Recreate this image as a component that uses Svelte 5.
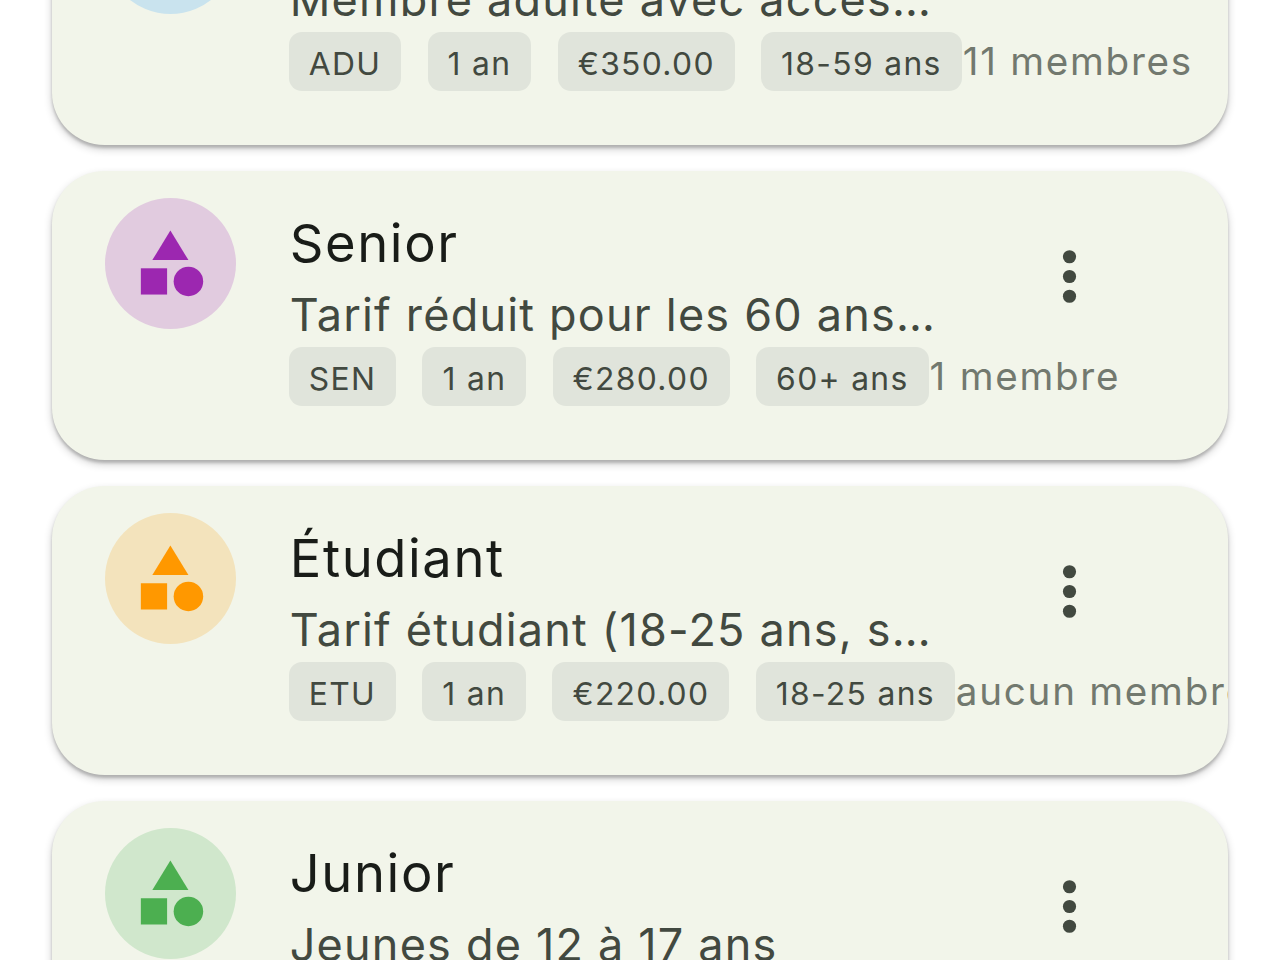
<script>
  const categories = [
    {
      name: "Adulte",
      description: "Membre adulte avec accès…",
      color: "#2196f3",
      tint: "#c9e3ee",
      tags: ["ADU", "1 an", "€350.00", "18-59 ans"],
      members: "11 membres",
    },
    {
      name: "Senior",
      description: "Tarif réduit pour les 60 ans…",
      color: "#9c27b0",
      tint: "#e1cbdf",
      tags: ["SEN", "1 an", "€280.00", "60+ ans"],
      members: "1 membre",
    },
    {
      name: "Étudiant",
      description: "Tarif étudiant (18-25 ans, s…",
      color: "#ff9800",
      tint: "#f3e3bc",
      tags: ["ETU", "1 an", "€220.00", "18-25 ans"],
      members: "aucun membre",
    },
    {
      name: "Junior",
      description: "Jeunes de 12 à 17 ans",
      color: "#4caf50",
      tint: "#d0e7cc",
      tags: ["JUN", "1 an", "€150.00", "12-17 ans"],
      members: "4 membres",
    },
  ];
</script>

<main>
  <div class="list">
    {#each categories as category}
      <article class="card">
        <div class="avatar" style="background: {category.tint}; color: {category.color}">
          <svg viewBox="0 0 24 24" width="78.75" height="78.75" fill="currentColor">
            <path d="M12 2l-5.5 9h11z" />
            <circle cx="17.5" cy="17.5" r="4.5" />
            <path d="M3 13.5h8v8H3z" />
          </svg>
        </div>
        <div class="content">
          <h3>{category.name}</h3>
          <p class="description">{category.description}</p>
          <div class="details">
            <div class="tags">
              {#each category.tags as tag}
                <span class="tag">{tag}</span>
              {/each}
            </div>
            <span class="members">{category.members}</span>
          </div>
        </div>
        <button class="menu" aria-label="Menu">
          <svg viewBox="0 0 24 24" width="79" height="79" fill="currentColor">
            <circle cx="12" cy="6" r="2" />
            <circle cx="12" cy="12" r="2" />
            <circle cx="12" cy="18" r="2" />
          </svg>
        </button>
      </article>
    {/each}
  </div>
</main>

<style>
  :global(body) {
    background: #fff;
    overflow: hidden;
  }

  main {
    height: 960px;
    overflow: hidden;
    font-family: Inter, "Noto Sans", sans-serif;
  }

  .list {
    display: flex;
    flex-direction: column;
    gap: 26.25px;
    margin-top: -143.75px;
    padding: 0 52.4px;
  }

  .card {
    display: grid;
    grid-template-columns: 131.25px 641px 79px;
    column-gap: 52.5px;
    flex: none;
    box-sizing: border-box;
    height: 288.75px;
    padding: 26.25px 52.6px;
    overflow: hidden;
    border-radius: 52.5px;
    background: #f2f5ea;
    box-shadow:
      0 3px 3px rgba(0, 0, 0, 0.18),
      0 4px 8px rgba(0, 0, 0, 0.2);
  }

  .avatar {
    display: flex;
    align-items: center;
    justify-content: center;
    width: 131.25px;
    height: 131.25px;
    border-radius: 50%;
  }

  .content {
    padding-top: 6px;
    white-space: nowrap;
  }

  h3 {
    margin: 0;
    padding-left: 1px;
    color: #191c18;
    font-size: 52.5px;
    font-weight: 400;
    line-height: 79px;
    letter-spacing: 1.6px;
  }

  .description {
    margin: 0;
    padding-left: 1px;
    color: #424940;
    font-size: 45px;
    line-height: 64.4px;
    letter-spacing: 1.2px;
  }

  .details {
    display: flex;
    width: max-content;
  }

  .tags {
    display: flex;
    gap: 26.25px;
  }

  .tag {
    height: 59px;
    padding: 0 20px;
    border-radius: 13px;
    background: #e0e4db;
    color: #424940;
    font-size: 31.8px;
    line-height: 63.5px;
    letter-spacing: 1.33px;
  }

  .members {
    padding-left: 1px;
    color: #72796f;
    font-size: 38.6px;
    line-height: 59px;
    letter-spacing: 1.75px;
  }

  .menu {
    display: flex;
    align-self: start;
    width: 79px;
    margin: 39.5px 0 0 48px;
    padding: 0;
    border: 0;
    background: none;
    color: #424940;
  }
</style>
